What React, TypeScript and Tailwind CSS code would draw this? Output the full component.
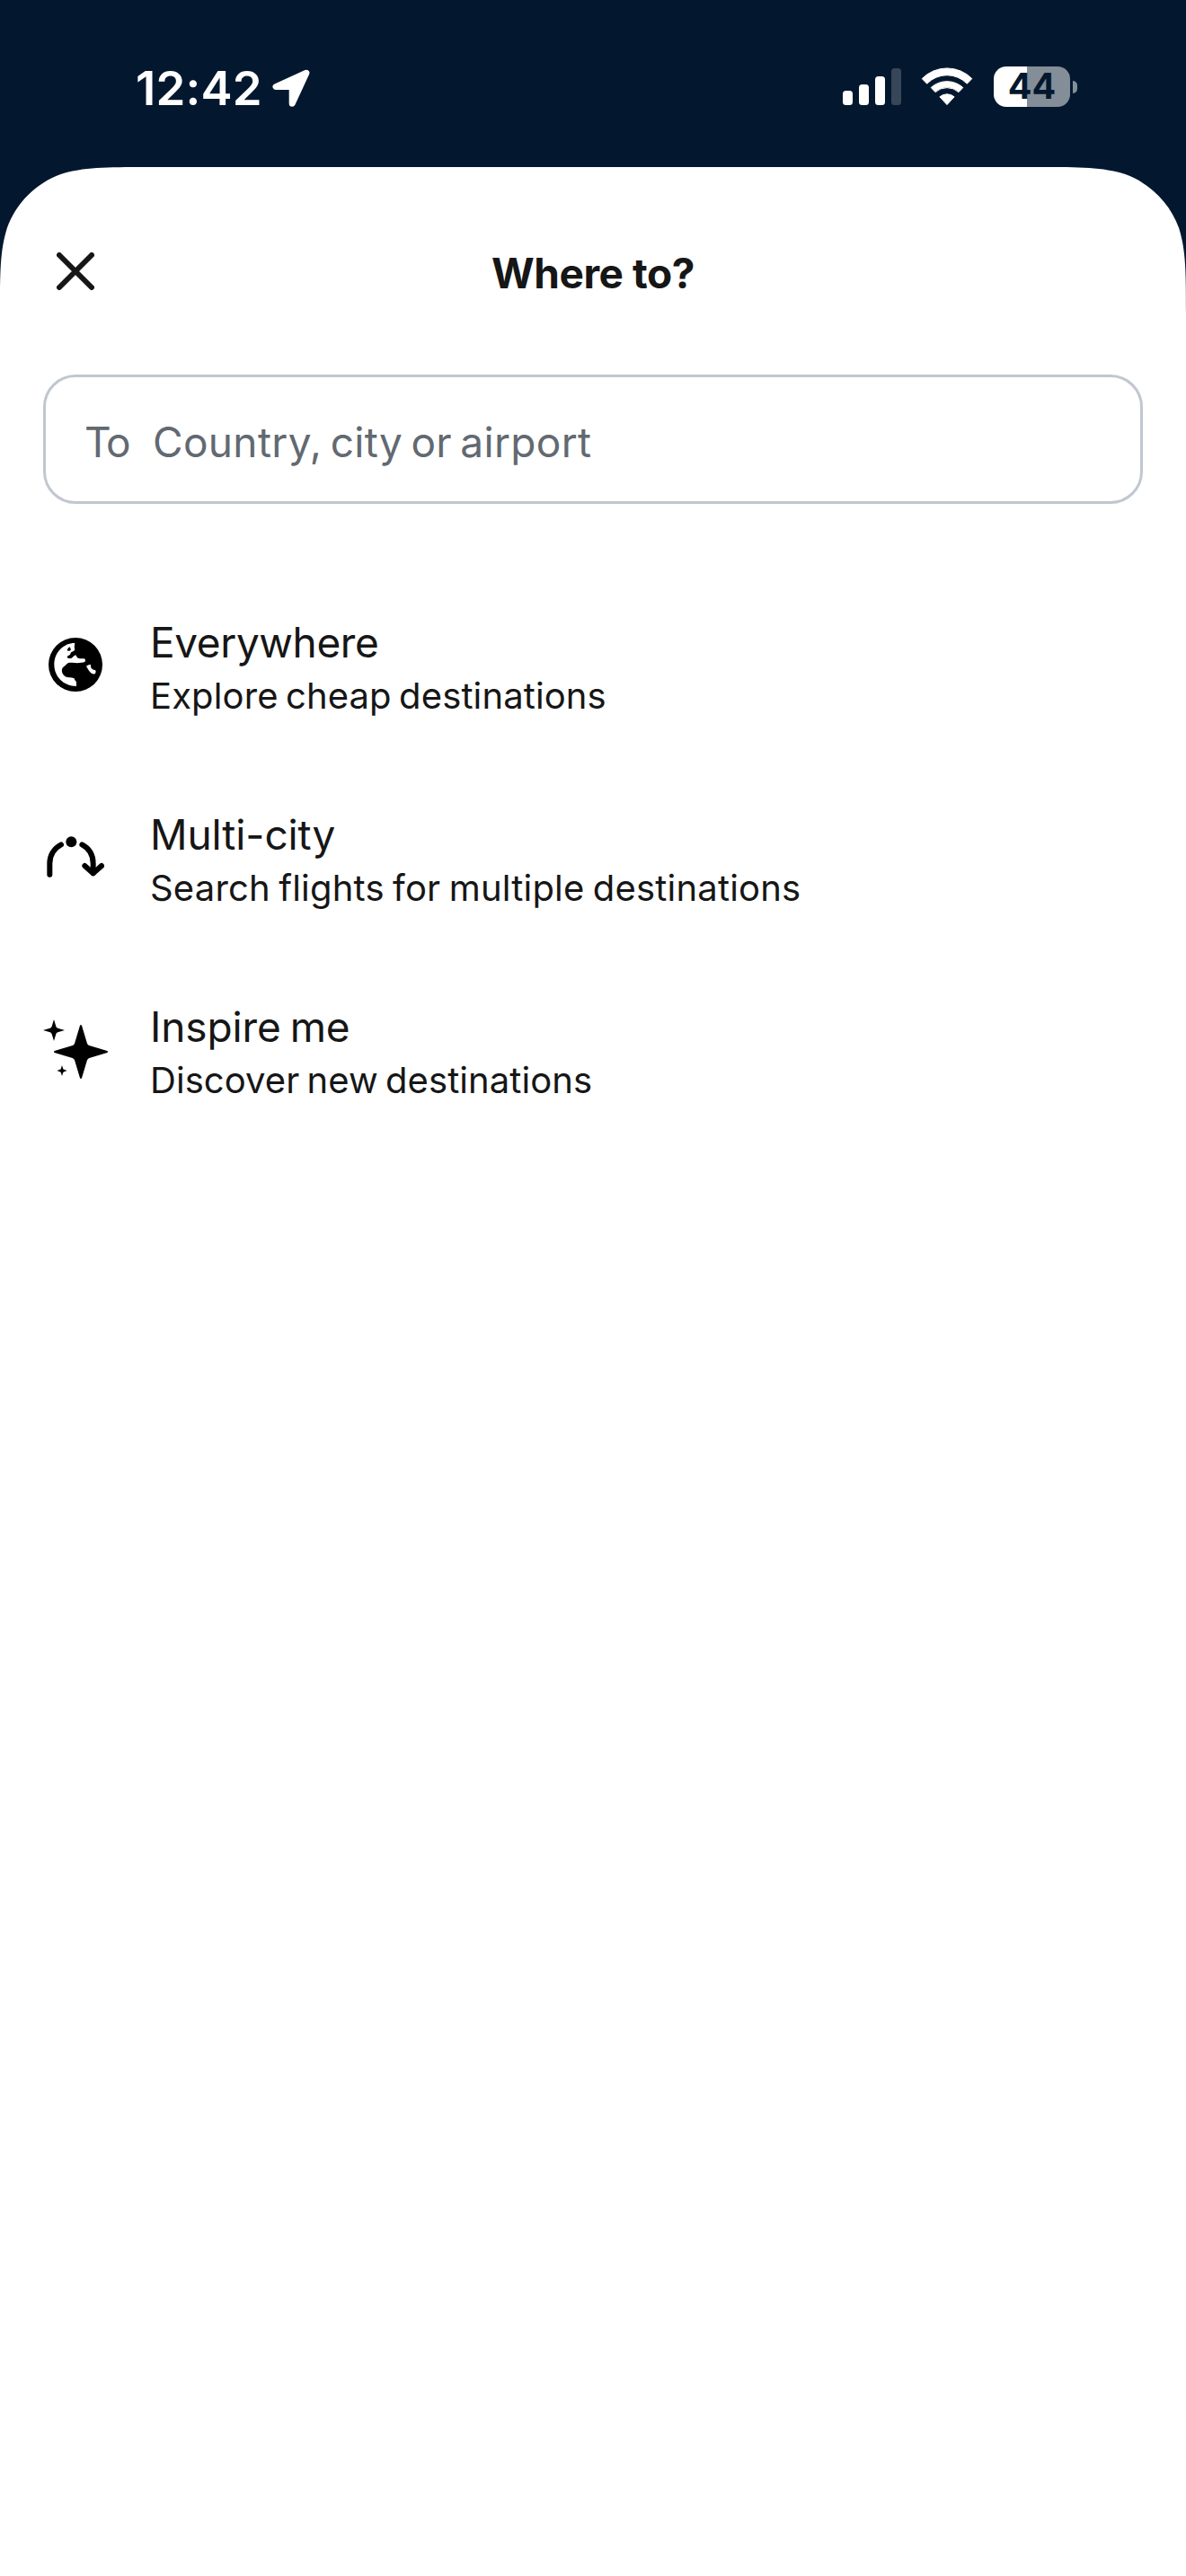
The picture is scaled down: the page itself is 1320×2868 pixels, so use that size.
import React from "react";

function LocationArrow() {
  return (
    <svg className="h-[42px] w-[42px]" viewBox="0 0 42 42" fill="white" stroke="white" strokeWidth="7" strokeLinejoin="round">
      <path d="M37.9 4.2 4 19.6H22.2V38.3Z" />
    </svg>
  );
}

function WifiIcon() {
  return (
    <svg className="h-[43px] w-[58px]" viewBox="0 0 58 43" fill="white" stroke="white" strokeWidth="1" strokeLinejoin="round">
      <path d="M1.2 12.6A39 39 0 0 1 56.8 12.6L51.3 18.2A31 31 0 0 0 6.7 18.2Z" />
      <path d="M11.2 22.5A26.5 26.5 0 0 1 46.8 22.5L42 27.6A19.4 19.4 0 0 0 16 27.6Z" />
      <path d="M20.9 32.8A12.5 12.5 0 0 1 37.1 32.8L29 41.6Z" />
    </svg>
  );
}

function Battery() {
  return (
    <div className="flex items-center gap-[3px]">
      <div className="flex h-[45px] w-[85px] items-center justify-center rounded-[14px] bg-[linear-gradient(90deg,#ffffff_37px,#848e98_37px)]">
        <span className="text-[39.5px] leading-[45px] font-bold text-[#03182f]">44</span>
      </div>
      <div className="h-[14px] w-[5px] rounded-r-full bg-[#848e98]" />
    </div>
  );
}

function StatusBar() {
  return (
    <div className="flex h-[186px] items-start justify-between pt-[70px] pr-[121px] pl-[151px]">
      <div className="flex h-[56px] items-center gap-[11px]">
        <span className="text-[52.7px] leading-[56px] font-semibold tracking-[0.2px] text-white">12:42</span>
        <LocationArrow />
      </div>
      <div className="flex h-[53px] items-center">
        <div className="flex h-[41px] items-end gap-[7px]">
          <div className="h-[16px] w-[11px] rounded-[3.5px] bg-white" />
          <div className="h-[23px] w-[11px] rounded-[3.5px] bg-white" />
          <div className="h-[32px] w-[11px] rounded-[3.5px] bg-white" />
          <div className="h-[41px] w-[11px] rounded-[3.5px] bg-[#374658]" />
        </div>
        <div className="ml-[22px] flex">
          <WifiIcon />
        </div>
        <div className="ml-[23px]">
          <Battery />
        </div>
      </div>
    </div>
  );
}

function SheetCorner({ className }: { className: string }) {
  return (
    <svg className={className} viewBox="0 0 164 164" fill="#03182f">
      <path d="M0 0H164C117 0 93 0 67.5 8C40 18 18 40 8 67.5C0 93 0 117 0 164Z" />
    </svg>
  );
}

function CloseIcon() {
  return (
    <svg className="h-[42px] w-[42px]" viewBox="0 0 42 42" stroke="#161616" strokeWidth="6" strokeLinecap="round">
      <path d="M3 3 39 39M39 3 3 39" />
    </svg>
  );
}

function GlobeIcon() {
  return (
    <svg className="h-[60px] w-[60px]" viewBox="72 89 180 180">
      <circle cx="162" cy="179" r="90" fill="black" />
      <path
        fill="white"
        d="M160 107C121 107 91 139 91 179C91 219 123 251 165 251V237C162 233 159 230 158 225C148 220 137 224 128 219C119 213 115 203 117 194C119 187 128 184 133 177C138 171 148 172 158 173C170 174 184 173 193 170C196 167 195 162 192 159C184 158 175 160 168 156C166 152 165 148 162 147C157 149 154 154 149 157C143 159 136 158 134 154C134 149 141 148 144 145C146 142 145 138 150 136C155 135 159 132 160 128C157 122 159 114 160 107Z"
      />
      <path fill="black" d="M142 120C145 123 147 127 146 131C142 134 138 134 134 132C135 127 138 123 142 120Z" />
      <path fill="white" d="M198 184C202 180 207 179 212 178C214 183 212 188 216 192C220 197 226 196 230 199C229 203 230 207 227 210C222 211 216 209 213 206C207 199 203 193 198 184Z" />
    </svg>
  );
}

function MultiCityIcon() {
  return (
    <svg className="h-[46px] w-[64px]" viewBox="66 93 192 138">
      <g fill="none" stroke="black" strokeWidth="18" strokeLinecap="round" strokeLinejoin="round">
        <path d="M76 221V184C76 156 91 133 114 121" />
        <path d="M184 121C207 133 221 156 221 184V216" />
        <path d="M193 192 221 217 249 192" />
      </g>
      <circle cx="148" cy="112" r="18" fill="black" />
    </svg>
  );
}

function SparklesIcon() {
  return (
    <svg className="h-[66px] w-[72px]" viewBox="54 75 216 198" fill="black">
      <path d="M177 95Q180 91 183 95L201 155Q203 160 208 162L268 180Q272 183 268 186L208 204Q203 206 201 211L183 271Q180 275 177 271L159 211Q157 206 152 204L92 186Q88 183 92 180L152 162Q157 160 159 155Z" />
      <path d="M90 75L97 98Q98 103 103 104L126 111L103 118Q98 119 97 124L90 147L83 124Q82 119 77 118L54 111L77 104Q82 103 83 98Z" />
      <path d="M117 228L120.500 239Q121 242 124 242.500L134 246L124 249.500Q121 250 120.500 253L117 264L113.500 253Q113 250 110 249.500L100 246L110 242.500Q113 242 113.500 239Z" />
    </svg>
  );
}

const options = [
  { title: "Everywhere", subtitle: "Explore cheap destinations", icon: <GlobeIcon />, titleClass: "tracking-[-0.39px]", subtitleClass: "tracking-[0.12px] [word-spacing:-3px]" },
  { title: "Multi-city", subtitle: "Search flights for multiple destinations", icon: <MultiCityIcon />, titleClass: "tracking-[-0.09px]", subtitleClass: "tracking-[0.18px] [word-spacing:-2px]" },
  { title: "Inspire me", subtitle: "Discover new destinations", icon: <SparklesIcon />, titleClass: "tracking-[-0.1px] [word-spacing:-3px]", subtitleClass: "tracking-[0.06px] [word-spacing:-3px]" },
];

export default function App() {
  return (
    <div className="flex h-[2868px] w-[1320px] flex-col bg-[#03182f] font-['Inter',sans-serif]">
      <StatusBar />
      <main className="relative flex-1 bg-white text-[#161616]">
        <SheetCorner className="absolute top-0 left-0 h-[164px] w-[164px]" />
        <SheetCorner className="absolute top-0 right-0 h-[164px] w-[164px] -scale-x-100" />
        <header className="grid h-[231px] grid-cols-[1fr_auto_1fr] items-center px-[63px]">
          <button aria-label="Close" className="flex w-[42px]">
            <CloseIcon />
          </button>
          <h1 className="pt-[5px] text-[46px] leading-[60px] font-bold tracking-[-0.45px]">Where to?</h1>
        </header>
        <div className="mx-[48px] flex h-[144px] items-center rounded-[36px] border-3 border-[#c1c7cf] pt-[6px] pl-[43px] text-[46px] leading-[60px] text-[#626971]">
          <span className="w-[76px] tracking-[-2px]">To</span>
          <span className="tracking-[0.33px] [word-spacing:-4px]">Country, city or airport</span>
        </div>
        <ul className="mt-[124px] flex flex-col gap-[94px] pl-12">
          {options.map((o) => (
            <li key={o.title} className="flex gap-[47px]">
              <div className="flex h-[110px] w-[72px] items-center justify-center">{o.icon}</div>
              <div>
                <div className={`text-[46px] leading-[60px] ${o.titleClass}`}>{o.title}</div>
                <div className={`text-[40px] leading-[60px] ${o.subtitleClass}`}>{o.subtitle}</div>
              </div>
            </li>
          ))}
        </ul>
      </main>
    </div>
  );
}
